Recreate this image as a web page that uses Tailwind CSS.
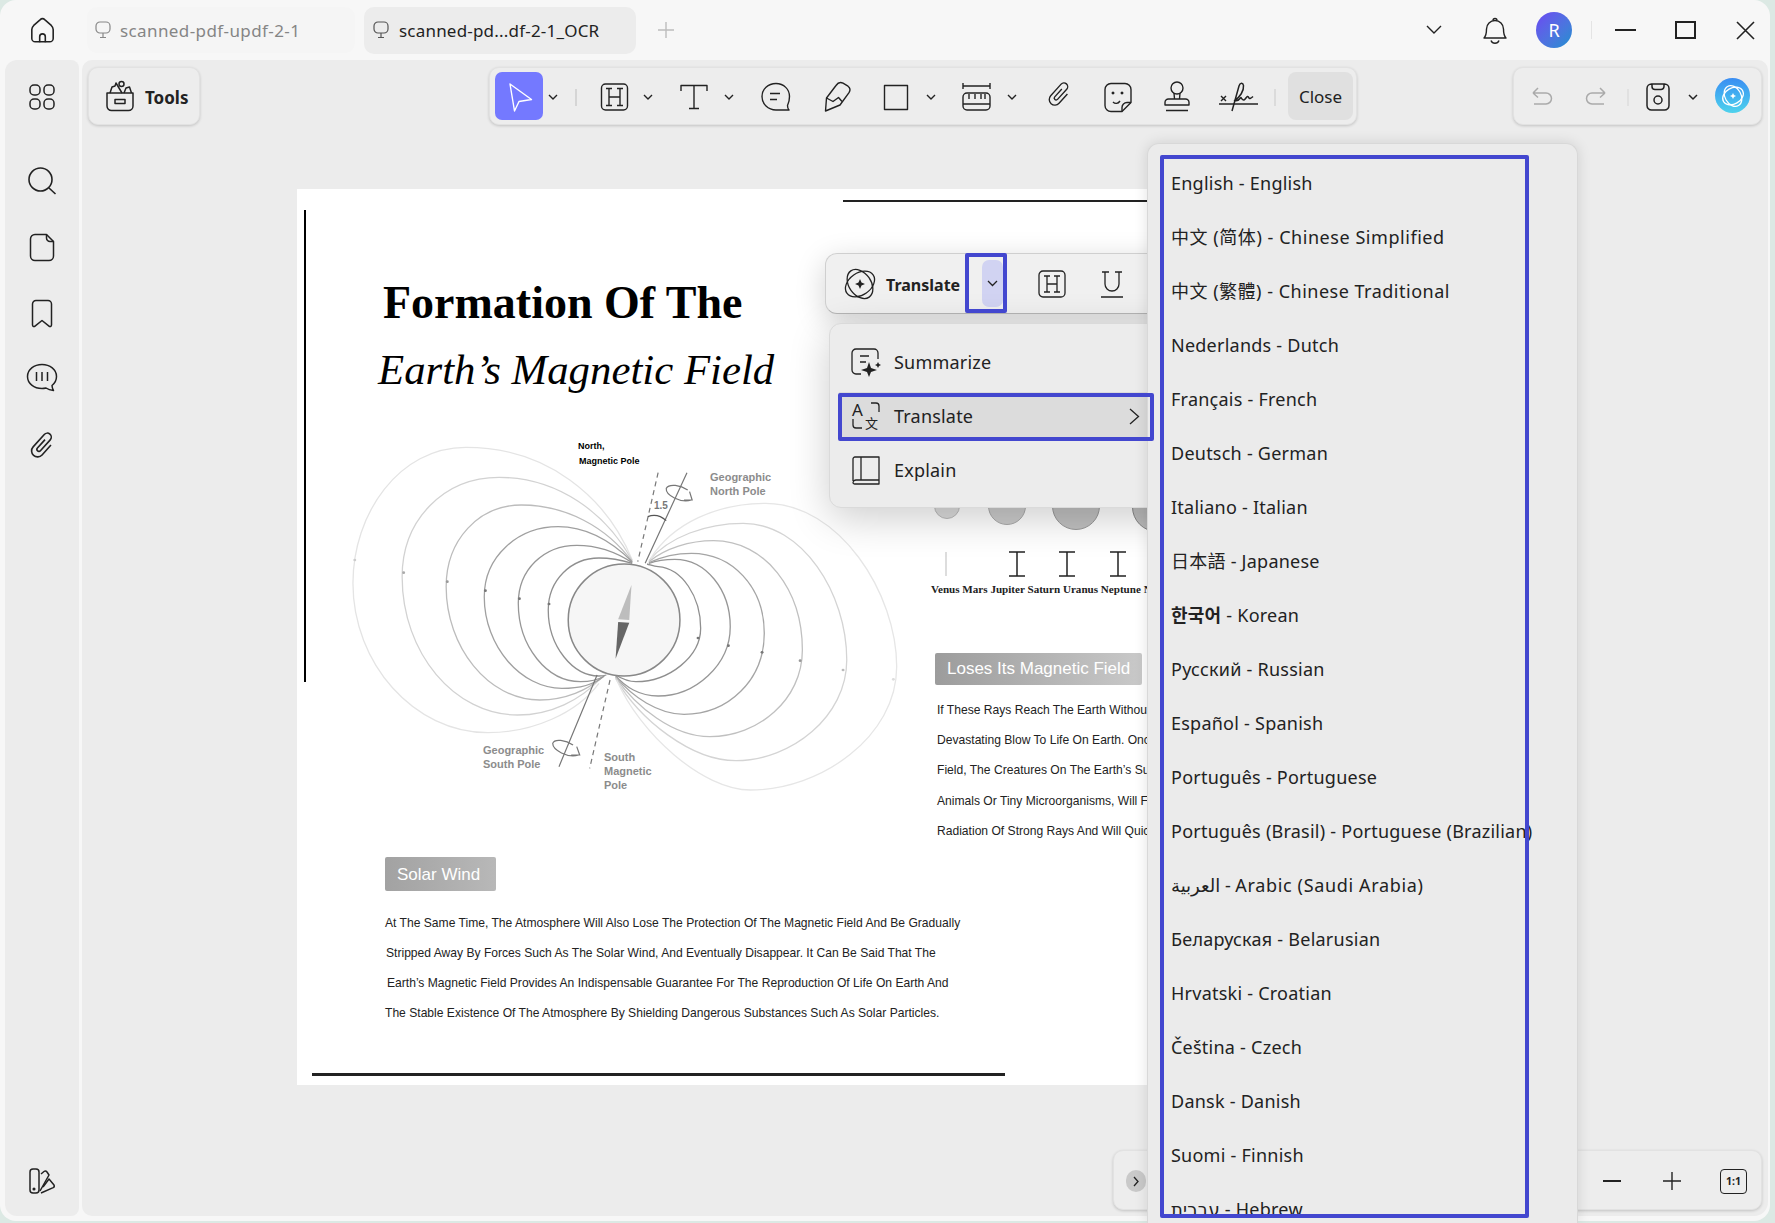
<!DOCTYPE html>
<html lang="en">
<head>
    <meta charset="UTF-8">
    <meta name="viewport" content="width=device-width, initial-scale=1.0">
    <script src="https://cdn.jsdelivr.net/npm/@tailwindcss/browser@4"></script>
    <title>UPDF</title>
</head>
<body class="bg-[#dce9e4] font-['Noto_Sans','DejaVu_Sans','Noto_Sans_CJK_SC',sans-serif] text-[#222]">
<div class="relative w-[1775px] h-[1223px] overflow-hidden">
    <!-- Window -->
    <div class="w-[1770px] h-[1221px] bg-[#f7f7f7] rounded-[16px] flex flex-col">
        <!-- Title bar -->
        <div class="h-[60px] flex items-center shrink-0">
            <svg class="ml-[29px] w-[27px] h-[27px]" viewBox="0 0 24 24" fill="none" stroke="#222" stroke-width="1.4" stroke-linejoin="round">
                <path d="M2.5 11c0-1.500 .7-2.500 1.700-3.500L9.800 2.500a3.200 3.200 0 0 1 4.400 0l5.600 5c1 1 1.700 2 1.700 3.500v8a3 3 0 0 1-3 3h-13a3 3 0 0 1-3-3z"/>
                <path d="M9.500 22.500v-5a2.500 2.500 0 0 1 5 0v5"/>
            </svg>
            <div class="ml-[31px] w-[268px] h-[46px] rounded-[10px] bg-[#f5f5f5] flex items-center pl-[8px]">
                <svg class="w-[16px] h-[18px]" viewBox="0 0 16 18" fill="none" stroke="#888" stroke-width="1.2"><rect x="1" y="1" width="14" height="11" rx="4"/><path d="M8 12v4M5 16.500h6"/></svg>
                <span class="ml-[9px] text-[17px] tracking-[0.4px] text-[#858585] leading-none">scanned-pdf-updf-2-1</span>
            </div>
            <div class="ml-[9px] w-[272px] h-[47px] rounded-[10px] bg-[#ececec] flex items-center pl-[9px]">
                <svg class="w-[16px] h-[18px]" viewBox="0 0 16 18" fill="none" stroke="#555" stroke-width="1.2"><rect x="1" y="1" width="14" height="11" rx="4"/><path d="M8 12v4M5 16.500h6"/></svg>
                <span class="ml-[10px] text-[17px] tracking-[0.2px] leading-none">scanned-pd...df-2-1_OCR</span>
            </div>
            <svg class="ml-[21px] w-[18px] h-[18px]" viewBox="0 0 18 18" stroke="#bdbdbd" stroke-width="1.4"><path d="M9 1v16M1 9h16"/></svg>
            <svg class="ml-[751px] w-[16px] h-[10px]" viewBox="0 0 16 10" fill="none" stroke="#222" stroke-width="1.4"><path d="M1 1l7 7 7-7"/></svg>
            <svg class="ml-[40px] w-[26px] h-[30px]" viewBox="0 0 26 30" fill="none" stroke="#222" stroke-width="1.4" stroke-linejoin="round">
                <path d="M2 23c2-2 2.500-4 2.500-9a8.500 8.500 0 0 1 17 0c0 5 .5 7 2.500 9z"/><path d="M11 5.500a2 2 0 0 1 4 0"/><path d="M9 25.500a4.300 4.300 0 0 0 8 0"/>
            </svg>
            <div class="ml-[28px] w-[36px] h-[36px] rounded-full bg-gradient-to-br from-[#6a45f2] to-[#0f8fcf] flex items-center justify-center text-white text-[18px]">R</div>
            <div class="ml-[19px] w-px h-[18px] bg-[#e4e4e4]"></div>
            <div class="ml-[23px] w-[21px] h-[2px] bg-[#222]"></div>
            <div class="ml-[39px] w-[21px] h-[18px] border-2 border-[#222]"></div>
            <svg class="ml-[40px] w-[19px] h-[19px]" viewBox="0 0 19 19" stroke="#222" stroke-width="1.6"><path d="M1 1l17 17M18 1L1 18"/></svg>
        </div>

        <div class="flex flex-1 gap-[3px] pl-[5px] pr-[2px] pb-[5px]">
            <!-- Sidebar -->
            <div class="w-[74px] bg-[#ececec] rounded-l-[12px] rounded-r-[8px] flex flex-col items-center">
                <svg class="mt-[24px] w-[26px] h-[26px]" viewBox="0 0 26 26" fill="none" stroke="#222" stroke-width="1.5"><rect x="1" y="1" width="10" height="10" rx="4"/><rect x="15" y="1" width="10" height="10" rx="4"/><rect x="1" y="15" width="10" height="10" rx="4"/><rect x="15" y="15" width="10" height="10" rx="4"/></svg>
                <svg class="mt-[56px] w-[30px] h-[30px]" viewBox="0 0 30 30" fill="none" stroke="#222" stroke-width="1.6"><circle cx="13.500" cy="13.500" r="11.500"/><path d="M22 22l6.500 6"/></svg>
                <svg class="mt-[37px] w-[26px] h-[29px]" viewBox="0 0 26 29" fill="none" stroke="#222" stroke-width="1.5" stroke-linejoin="round"><path d="M6 1.500h11.500l7 7V23a4.500 4.500 0 0 1-4.500 4.500H6A4.500 4.500 0 0 1 1.500 23V6A4.500 4.500 0 0 1 6 1.500z"/><path d="M17.500 1.500v3.500a3.500 3.500 0 0 0 3.500 3.500h3.500"/></svg>
                <svg class="mt-[37px] w-[22px] h-[29px]" viewBox="0 0 22 29" fill="none" stroke="#222" stroke-width="1.500" stroke-linejoin="round"><path d="M1.500 5a3.500 3.500 0 0 1 3.500-3.500h12a3.500 3.500 0 0 1 3.500 3.500v21c0 1.500-1.500 2-2.500 1.200L11 21.500l-7 5.700c-1 .8-2.500.3-2.500-1.200z"/></svg>
                <svg class="mt-[35px] w-[32px] h-[30px]" viewBox="0 0 32 30" fill="none" stroke="#222" stroke-width="1.500" stroke-linejoin="round"><path d="M16 1.500c8 0 14.500 5 14.500 12 0 3.500-1.500 6.500-4.500 9 0 1.500.5 3 1.500 5-3-.2-5.500-1-7.500-2.500-1.300.3-2.700.5-4 .5C8 25.500 1.500 20.500 1.500 13.500S8 1.500 16 1.500z"/><path d="M10.500 9v9M16 9v9M21.500 9v9"/></svg>
                <svg class="mt-[36px] w-[32px] h-[32px]" viewBox="0 0 24 24" fill="none" stroke="#222" stroke-width="1.200"><g transform="rotate(42 12 12)"><path d="M11 7.500V16a1.500 1.500 0 0 0 3 0V5a3 3 0 0 0-6 0v12.500a4.500 4.500 0 0 0 9 0V7.500"/></g></svg>
                <svg class="mt-auto mb-[21px] w-[28px] h-[28px]" viewBox="0 0 28 28" fill="none" stroke="#222" stroke-width="1.500" stroke-linejoin="round"><rect x="2" y="2" width="9" height="24" rx="3"/><path d="M13 7l3-2.500c1.200-.8 2.200-.5 3 .5l2 3-9 16"/><path d="M15 20l6-8 5 6c.5 1 .3 2-.8 2.600L13 26"/><circle cx="6" cy="22" r=".8" fill="#222"/></svg>
            </div>

            <!-- Main area -->
            <div class="flex-1 bg-[#ececec] rounded-[10px] rounded-br-[14px] flex flex-col relative overflow-hidden">
                <div class="flex items-start pt-[7px] h-[65px]">
                    <div class="ml-[6px] w-[112px] h-[58px] rounded-[10px] bg-[#ededed] border border-[#e2e2e2] shadow-[0_1px_3px_rgba(0,0,0,0.18)] flex items-center pl-[16px]">
                        <svg class="w-[30px] h-[32px]" viewBox="0 0 30 32" fill="none" stroke="#222" stroke-width="1.500" stroke-linejoin="round"><path d="M2 13h26v13a4.500 4.500 0 0 1-4.500 4.500h-17A4.500 4.500 0 0 1 2 26z"/><path d="M10 19.500h10v4H10z"/><path d="M5 13l2-6 3-1 1-3 3 5 3 5"/><circle cx="16.500" cy="4" r="2.500"/><path d="M19 13l2-5 3.500-1 2 6"/></svg>
                        <span class="ml-[10px] pt-[3px] text-[17px] font-bold">Tools</span>
                    </div>
                    <!-- Annotation toolbar -->
                    <div class="ml-[289px] w-[868px] h-[58px] rounded-[10px] bg-[#ededed] border border-[#e2e2e2] shadow-[0_1px_3px_rgba(0,0,0,0.18)] relative">
                        <div class="absolute left-[5px] top-[4px] w-[48px] h-[48px] rounded-[7px] bg-[#7479ff]"></div>
                        <svg class="absolute left-0 top-0 w-[868px] h-[58px]" viewBox="490 67 868 58" fill="none" stroke="#222" stroke-width="1.400" stroke-linejoin="round">
                            <path d="M510 83l21.500 15.500-12.500 2-4.500 9.500z" stroke="#fff"/>
                            <path d="M549 94l4 4 4-4M644 94l4 4 4-4M725 94l4 4 4-4M927 94l4 4 4-4M1008 94l4 4 4-4"/>
                            <path d="M576 88v17" stroke="#d5d5d5" stroke-width="2"/>
                            <rect x="601.500" y="83" width="26" height="26" rx="4"/>
                            <path d="M606 87.500h6M606 104.500h6M617 87.500h6M617 104.500h6M609 87.500v17M620 87.500v17M609 96h11"/>
                            <path d="M681 90v-5.500h26V90M694 84.500v23M689 107.500h10"/>
                            <path d="M776 82.500c8 0 13.500 6 13.500 13 0 4-1 7-2 9 0 2 .5 3.500 1.500 4.500h-13c-8 0-14-6-14-13.500s6-13 14-13z"/>
                            <path d="M770 92.500h10M770 98.500h7"/>
                            <path d="M825.500 110l1-13 9.500-12.500c2-3 4.500-3.800 7-2.300l5 3c2 1.500 2.500 4 1 6.500L840 104l-14.500 6z"/><path d="M826.500 97l6.500 3.500 5.500-4 3.500 4"/>
                            <rect x="884.500" y="84.500" width="23" height="24"/>
                            <path d="M963 82v6M990 82v6M963 85h27"/>
                            <rect x="963" y="92" width="27" height="17" rx="4"/><path d="M963 103h27M969 93v5M975 93v5M981 93v5M985 93v5"/>
                            <g transform="translate(1044 78) scale(1.250)"><g transform="rotate(42 12 12)"><path d="M11 7.500V16a1.500 1.500 0 0 0 3 0V5a3 3 0 0 0-6 0v12.500a4.500 4.500 0 0 0 9 0V7.500" stroke-width="1.100"/></g></g>
                            <path d="M1111 82.500h14a6 6 0 0 1 6 6v13l-9 9h-11a6 6 0 0 1-6-6v-16a6 6 0 0 1 6-6z"/><path d="M1122 110.500v-4a5 5 0 0 1 5-5h4"/><path d="M1113 101c2 2 5 2 7-1"/><circle cx="1113" cy="92" r=".8" fill="#222"/><circle cx="1122" cy="92" r=".8" fill="#222"/>
                            <circle cx="1177" cy="87" r="6"/><path d="M1174 92l.5 6M1180 92l-.5 6"/><path d="M1165 104v-2.500a3.500 3.500 0 0 1 3.500-3.500h17a3.500 3.500 0 0 1 3.500 3.500v2.500z"/><path d="M1166 109.500h22"/>
                            <path d="M1219 103h39"/><path d="M1221 95l5 5M1226 95l-5 5"/><path d="M1232 110c2-7 5-18 7-25 1-3.500 4-3.500 4.500-.5 .5 5-3.500 12-9 15 3 1 5-1 6.500-3 1 2 1.500 3 3 2.500s2-3 3.500-3.500 1 2.500 2.500 2 2-1 3-2" stroke-width="1.500"/>
                            <path d="M1275 88v17" stroke="#d5d5d5" stroke-width="1.500"/>
                        </svg>
                        <div class="absolute left-[798px] top-[4px] w-[65px] h-[48px] pt-[2px] rounded-[8px] bg-[#e0e0e0] flex items-center justify-center text-[17px]">Close</div>
                    </div>
                    <div class="ml-[156px] w-[249px] h-[58px] rounded-[10px] bg-[#ededed] border border-[#e2e2e2] shadow-[0_1px_3px_rgba(0,0,0,0.18)] relative">
                        <svg class="absolute left-0 top-0 w-[249px] h-[58px]" viewBox="1513 67 249 58" fill="none" stroke="#aaa" stroke-width="1.500" stroke-linejoin="round">
                            <path d="M1532 92l5-5M1532 92l5 4.500M1532 92h13a5.500 5.500 0 0 1 0 11h-12"/>
                            <path d="M1604 92l-5-5M1604 92l-5 4.500M1604 92h-13a5.500 5.500 0 0 0 0 11h12"/>
                            <path d="M1627 88v17" stroke="#dcdcdc"/>
                            <path d="M1651 83h-.5a4.500 4.500 0 0 0-4.500 4.500v17a4.500 4.500 0 0 0 4.500 4.500h13a4.500 4.500 0 0 0 4.500-4.500v-17a4.500 4.500 0 0 0-4.500-4.500h-.5M1651 83v2.500a3 3 0 0 0 3 3h6a3 3 0 0 0 3-3V83M1651 83h12" stroke="#222"/>
                            <circle cx="1657" cy="99" r="4" stroke="#222"/>
                            <path d="M1688 94l4 4 4-4" stroke="#222"/>
                        </svg>
                        <div class="absolute left-[201px] top-[10px] w-[35px] h-[35px] rounded-full bg-gradient-to-b from-[#3b8df2] to-[#4fd2ec] flex items-center justify-center">
                            <svg class="w-[26px] h-[26px]" viewBox="0 0 26 26" fill="none" stroke="#fff" stroke-width="1.300"><ellipse cx="13" cy="13" rx="11" ry="8" transform="rotate(-30 13 13)"/><ellipse cx="13" cy="13" rx="11" ry="8" transform="rotate(60 13 13)"/><path d="M13 10l1 2 2 1-2 1-1 2-1-2-2-1 2-1z" fill="#fff" stroke="none"/></svg>
                        </div>
                    </div>
                </div>

                <!-- PDF page, runs on under the language panel -->
                <div class="relative mt-[64px] ml-[215px] w-[1000px] h-[896px] bg-white font-['Liberation_Sans',sans-serif] text-[#222]">
                    <div class="absolute left-[7px] top-[21px] w-[2px] h-[472px] bg-black"></div>
                    <div class="absolute left-[546px] top-[11px] w-[400px] h-[2px] bg-[#222]"></div>
                    <div class="absolute left-[15px] top-[884px] w-[693px] h-[3px] bg-[#222]"></div>

                    <div class="absolute left-[86px] top-[86px] font-['Liberation_Serif',serif] font-bold text-[46px] leading-[56px] text-black whitespace-nowrap">Formation Of The</div>
                    <div class="absolute left-[81px] top-[153px] font-['Liberation_Serif',serif] italic text-[42.800px] leading-[56px] text-black whitespace-nowrap">Earth’s Magnetic Field</div>

                    <!-- Magnetic field diagram -->
                    <svg class="absolute left-[43px] top-[231px] w-[580px] h-[400px]" viewBox="0 0 1568 1200" preserveAspectRatio="none" fill="none">
                        <g stroke-width="1.300">
                            <path vector-effect="non-scaling-stroke" stroke="#e4e4e4" d="M790 420C720 230 560 82 340 82 160 82 35 280 35 490 35 730 200 938 400 938 520 938 640 880 700 790"/>
                            <path vector-effect="non-scaling-stroke" stroke="#d2d2d2" d="M790 422C720 280 590 172 430 172 280 172 168 300 168 470 168 700 310 885 480 885 570 885 650 840 705 775"/>
                            <path vector-effect="non-scaling-stroke" stroke="#bcbcbc" d="M790 425C720 320 610 255 490 255 375 255 287 360 287 500 287 680 400 840 540 840 610 840 670 810 708 772"/>
                            <path vector-effect="non-scaling-stroke" stroke="#a0a0a0" d="M790 425C730 360 660 320 590 320 480 320 390 410 390 530 390 680 490 805 600 805 650 805 690 790 712 770"/>
                            <path vector-effect="non-scaling-stroke" stroke="#979797" d="M790 428C745 395 690 376 640 376 550 376 482 450 482 550 482 680 560 785 650 785 680 785 700 778 715 768"/>
                            <path vector-effect="non-scaling-stroke" stroke="#8f8f8f" d="M790 430C760 420 730 414 700 414 625 414 563 480 563 570 563 680 630 768 700 768 710 768 715 767 720 765"/>
                            <path vector-effect="non-scaling-stroke" stroke="#8f8f8f" d="M830 432C840 435 850 440 860 440 925 445 975 530 975 625 975 710 890 785 800 785 780 785 760 775 745 765"/>
                            <path vector-effect="non-scaling-stroke" stroke="#979797" d="M835 430C855 422 880 418 905 418 990 418 1055 510 1055 620 1055 735 960 828 860 828 810 828 770 800 745 767"/>
                            <path vector-effect="non-scaling-stroke" stroke="#a5a5a5" d="M835 428C870 410 910 400 950 400 1060 400 1147 500 1147 640 1147 780 1050 883 930 883 860 883 790 830 745 770"/>
                            <path vector-effect="non-scaling-stroke" stroke="#c0c0c0" d="M835 425C880 385 945 362 1010 362 1150 362 1250 510 1250 690 1250 840 1130 950 1000 950 900 950 800 860 745 772"/>
                            <path vector-effect="non-scaling-stroke" stroke="#d4d4d4" d="M835 422C890 350 990 310 1090 310 1250 310 1370 520 1370 720 1370 890 1220 1022 1070 1022 950 1022 810 900 745 775"/>
                            <path vector-effect="non-scaling-stroke" stroke="#e6e6e6" d="M840 415C900 310 1020 250 1150 250 1350 250 1505 520 1505 740 1505 950 1300 1110 1110 1110 980 1110 810 940 748 780"/>
                        </g>
                        <g fill="#777">
                            <circle cx="565" cy="552" r="4"/><circle cx="485" cy="536" r="4"/><circle cx="393" cy="512" r="4"/><circle cx="290" cy="485" r="4" fill="#999"/><circle cx="172" cy="458" r="4" fill="#aaa"/><circle cx="40" cy="420" r="4" fill="#ccc"/>
                            <circle cx="968" cy="654" r="4"/><circle cx="1050" cy="677" r="4"/><circle cx="1141" cy="697" r="4"/><circle cx="1244" cy="722" r="4" fill="#999"/><circle cx="1360" cy="750" r="4" fill="#bbb"/><circle cx="1496" cy="778" r="4" fill="#ddd"/>
                        </g>
                        <ellipse vector-effect="non-scaling-stroke" cx="768" cy="600" rx="151" ry="168" stroke="#888" stroke-width="1.500" fill="#f6f6f6"/>
                        <path d="M788 495L752 598 782 600z" fill="#bdbdbd"/>
                        <path d="M752 606L782 608 745 716z" fill="#666"/>
                        <g stroke="#777" stroke-width="1.200">
                            <path vector-effect="non-scaling-stroke" d="M938 158L825 430M695 765L592 1040"/>
                            <path vector-effect="non-scaling-stroke" stroke-dasharray="5 4" d="M860 158L805 425M730 780L675 1045"/>
                            <path vector-effect="non-scaling-stroke" d="M832 290C850 282 868 288 882 302" stroke="#555"/>
                            <path vector-effect="non-scaling-stroke" d="M940 210C920 195 890 190 882 205 880 225 920 250 950 240M945 215L952 240 930 240"/>
                            <path vector-effect="non-scaling-stroke" d="M630 975C610 960 580 955 575 970 575 990 615 1015 645 1005M640 980L648 1005 625 1005"/>
                        </g>
                    </svg>
                    <div class="absolute left-[357px] top-[309px] text-[10px] font-bold text-[#777]">1.5</div>
                    <div class="absolute left-[281px] top-[250px] text-[9px] leading-[15px] font-bold text-black">North,<br><span class="ml-[1px]">Magnetic Pole</span></div>
                    <div class="absolute left-[413px] top-[281px] text-[11px] leading-[14px] font-bold text-[#8c8c8c]">Geographic<br>North Pole</div>
                    <div class="absolute left-[186px] top-[554px] text-[11px] leading-[14px] font-bold text-[#8c8c8c]">Geographic<br>South Pole</div>
                    <div class="absolute left-[307px] top-[561px] text-[11px] leading-[14px] font-bold text-[#8c8c8c]">South<br>Magnetic<br>Pole</div>

                    <!-- Planets -->
                    <div class="absolute left-[637px] top-[290px] w-[26px] h-[40px] rounded-full bg-[#dcdcdc] border border-[#bbb]"></div>
                    <div class="absolute left-[691px] top-[290px] w-[38px] h-[46px] rounded-full bg-[#cbcbcb] border border-[#aaa]"></div>
                    <div class="absolute left-[755px] top-[290px] w-[48px] h-[51px] rounded-full bg-[#c0c0c0] border border-[#999]"></div>
                    <div class="absolute left-[835px] top-[290px] w-[50px] h-[53px] rounded-full bg-[#c0c0c0] border border-[#888]"></div>
                    <div class="absolute left-[648px] top-[363px] w-[2px] h-[24px] bg-[#ddd]"></div>
                    <svg class="absolute left-[712px] top-[362px] w-[138px] h-[26px]" viewBox="0 0 138 26" fill="none" stroke="#222" stroke-width="1.500"><path d="M0 1h16M8 1v24M0 25h16M50 1h16M58 1v24M50 25h16M101 1h16M109 1v24M101 25h16"/></svg>
                    <div class="absolute left-[634px] top-[393px] font-['Liberation_Serif',serif] font-bold text-[11.100px] leading-[14px] whitespace-nowrap">Venus Mars Jupiter Saturn Uranus Neptune Neptune</div>

                    <!-- Loses Its Magnetic Field -->
                    <div class="absolute left-[638px] top-[464px] w-[207px] h-[32px] rounded-[2px] bg-gradient-to-r from-[#9c9c9c] to-[#c9c9c9] text-white text-[17px] leading-[32px] pl-[12px] whitespace-nowrap">Loses Its Magnetic Field</div>
                    <div class="absolute left-[640px] top-[506px] text-[12.100px] leading-[30.200px] whitespace-nowrap">
                        <div>If These Rays Reach The Earth Without</div>
                        <div>Devastating Blow To Life On Earth. Once</div>
                        <div>Field, The Creatures On The Earth’s Surface</div>
                        <div>Animals Or Tiny Microorganisms, Will Face</div>
                        <div>Radiation Of Strong Rays And Will Quickly</div>
                    </div>

                    <!-- Solar Wind -->
                    <div class="absolute left-[88px] top-[668px] w-[111px] h-[34px] rounded-[2px] bg-gradient-to-r from-[#a2a2a2] to-[#b8b8b8] text-white text-[17px] leading-[35px] pl-[12px] whitespace-nowrap">Solar Wind</div>
                    <div class="absolute left-[88px] top-[719px] text-[12.100px] leading-[30px] whitespace-nowrap">
                        <div>At The Same Time, The Atmosphere Will Also Lose The Protection Of The Magnetic Field And Be Gradually</div>
                        <div class="ml-[1px]">Stripped Away By Forces Such As The Solar Wind, And Eventually Disappear. It Can Be Said That The</div>
                        <div class="ml-[2px]">Earth’s Magnetic Field Provides An Indispensable Guarantee For The Reproduction Of Life On Earth And</div>
                        <div>The Stable Existence Of The Atmosphere By Shielding Dangerous Substances Such As Solar Particles.</div>
                    </div>
                </div>

                <!-- Zoom bar -->
                <div class="absolute left-[1031px] top-[1090px] w-[649px] h-[60px] rounded-[10px] bg-[#ededed] border border-[#e2e2e2] shadow-[0_1px_3px_rgba(0,0,0,0.18)]">
                    <div class="absolute left-[12px] top-[19px] w-[20px] h-[22px] rounded-full bg-[#c9c9c9] flex items-center justify-center">
                        <svg class="w-[7px] h-[11px]" viewBox="0 0 7 11" fill="none" stroke="#222" stroke-width="1.300"><path d="M1 1l4 4.500L1 10"/></svg>
                    </div>
                    <div class="absolute left-[489px] top-[29px] w-[18px] h-[2px] bg-[#222]"></div>
                    <svg class="absolute left-[549px] top-[21px] w-[18px] h-[18px]" viewBox="0 0 18 18" stroke="#222" stroke-width="1.400"><path d="M9 0v18M0 9h18"/></svg>
                    <div class="absolute left-[606px] top-[18px] w-[27px] h-[25px] rounded-[4px] border-[1.500px] border-[#222] flex items-center justify-center text-[10.500px] font-bold">1:1</div>
                </div>
            </div>
        </div>
    </div>

    <!-- Floating selection toolbar -->
    <div class="absolute left-[825px] top-[253px] w-[420px] h-[61px] rounded-[12px] bg-[#f0f0f0] border border-[#cfcfcf] border-b-[#b5b5b5] shadow-[0_8px_30px_rgba(0,0,0,0.18)] flex items-center">
        <svg class="ml-[16px] w-[36px] h-[36px]" viewBox="0 0 36 36" fill="none" stroke="#222" stroke-width="1.300"><ellipse cx="18" cy="18" rx="16" ry="11" transform="rotate(-35 18 18)"/><ellipse cx="18" cy="18" rx="16" ry="11" transform="rotate(55 18 18)"/><path d="M18 13l1.500 3.500L23 18l-3.500 1.500L18 23l-1.500-3.500L13 18l3.500-1.500z" fill="#222" stroke="none"/></svg>
        <span class="ml-[8px] pt-[2px] text-[16px] font-bold">Translate</span>
        <div class="absolute left-[156px] top-[6px] w-[21px] h-[47px] rounded-[7px] bg-[#d1d3f2] flex items-center justify-center">
            <svg class="w-[11px] h-[7px]" viewBox="0 0 11 7" fill="none" stroke="#222" stroke-width="1.300"><path d="M1 1l4.500 4.500L10 1"/></svg>
        </div>
        <svg class="absolute left-[212px] top-[16px] w-[28px] h-[28px]" viewBox="0 0 28 28" fill="none" stroke="#222" stroke-width="1.300"><rect x="1" y="1" width="26" height="26" rx="4"/><path d="M6 6h6M6 22h6M16 6h6M16 22h6M9 6v16M19 6v16M9 14h10"/></svg>
        <svg class="absolute left-[273px] top-[15px] w-[26px] h-[30px]" viewBox="0 0 26 30" fill="none" stroke="#222" stroke-width="1.300"><path d="M3 3h7M16 3h7M6 3v12a7 7 0 0 0 14 0V3M2 28h22"/></svg>
    </div>
    <!-- Selection menu -->
    <div class="absolute left-[829px] top-[323px] w-[400px] h-[185px] rounded-[12px] bg-[#ececec] border border-[#dadada] shadow-[0_10px_40px_rgba(0,0,0,0.2)] pt-[11px] text-[18px] tracking-[0.2px]">
        <div class="h-[54px] flex items-center pl-[21px]">
            <svg class="w-[30px] h-[30px]" viewBox="0 0 30 30" fill="none" stroke="#222" stroke-width="1.300" stroke-linejoin="round"><path d="M10 27H5a4 4 0 0 1-4-4V6a4 4 0 0 1 4-4h18a4 4 0 0 1 4 4v6"/><path d="M9 9h9M9 15h6"/><path d="M18 15l2 6 6 2-6 2-2 5-2-5-6-2 6-2z" fill="#222" stroke="none"/><path d="M27 15l1 2 2 1-2 1-1 2-1-2-2-1 2-1z" fill="#222" stroke="none"/></svg>
            <span class="ml-[13px]">Summarize</span>
        </div>
        <div class="h-[48px] my-[3px] ml-[9px] bg-[#dcdcdc] flex items-center pl-[12px] relative">
            <svg class="w-[30px] h-[30px]" viewBox="0 0 30 30" fill="none" stroke="#222" stroke-width="1.300"><path d="M20 2h5a3 3 0 0 1 3 3v6M2 18v6a3 3 0 0 0 3 3h6"/><text x="1" y="15" font-size="17" fill="#222" stroke="none" font-family="Noto Sans">A</text><text x="14" y="27" font-size="13" fill="#222" stroke="none" font-family="Noto Sans CJK SC">文</text></svg>
            <span class="ml-[13px]">Translate</span>
            <svg class="absolute left-[290px] top-[16px] w-[11px] h-[17px]" viewBox="0 0 11 17" fill="none" stroke="#222" stroke-width="1.300"><path d="M1 1l8.500 7.500L1 16"/></svg>
        </div>
        <div class="h-[54px] flex items-center pl-[21px]">
            <svg class="w-[30px] h-[30px]" viewBox="0 0 30 30" fill="none" stroke="#222" stroke-width="1.300" stroke-linejoin="round"><path d="M2 26V4a2 2 0 0 1 2-2h24v23H5a3 3 0 0 0-3 3 2 2 0 0 0 2 1h24v-4"/><path d="M10 2v23"/></svg>
            <span class="ml-[13px]">Explain</span>
        </div>
    </div>

    <!-- Language panel -->
    <div class="absolute left-[1147px] top-[143px] w-[431px] bottom-0 rounded-t-[12px] bg-[#ebebeb] border border-[#d8d8d8] border-b-0 shadow-[0_0_14px_rgba(0,0,0,0.12)]">
        <div class="mt-[12px] pl-[23px] h-[1060px] overflow-hidden text-[18px] tracking-[0.24px] whitespace-nowrap">
            <div class="h-[54px] flex items-center"><span>English - English</span></div>
            <div class="h-[54px] flex items-center tracking-[0.55px]"><span>中文 (简体) - Chinese Simplified</span></div>
            <div class="h-[54px] flex items-center tracking-[0.5px]"><span>中文 (繁體) - Chinese Traditional</span></div>
            <div class="h-[54px] flex items-center"><span>Nederlands - Dutch</span></div>
            <div class="h-[54px] flex items-center"><span>Français - French</span></div>
            <div class="h-[54px] flex items-center"><span>Deutsch - German</span></div>
            <div class="h-[54px] flex items-center"><span>Italiano - Italian</span></div>
            <div class="h-[54px] flex items-center"><span>日本語 - Japanese</span></div>
            <div class="h-[54px] flex items-center"><span><b class="font-['Noto_Sans_CJK_KR',sans-serif]">한국어</b> - Korean</span></div>
            <div class="h-[54px] flex items-center"><span>Русский - Russian</span></div>
            <div class="h-[54px] flex items-center"><span>Español - Spanish</span></div>
            <div class="h-[54px] flex items-center"><span>Português - Portuguese</span></div>
            <div class="h-[54px] flex items-center"><span>Português (Brasil) - Portuguese (Brazilian)</span></div>
            <div class="h-[54px] flex items-center tracking-[0.65px]"><span>العربية - Arabic (Saudi Arabia)</span></div>
            <div class="h-[54px] flex items-center"><span>Беларуская - Belarusian</span></div>
            <div class="h-[54px] flex items-center"><span>Hrvatski - Croatian</span></div>
            <div class="h-[54px] flex items-center"><span>Čeština - Czech</span></div>
            <div class="h-[54px] flex items-center"><span>Dansk - Danish</span></div>
            <div class="h-[54px] flex items-center"><span>Suomi - Finnish</span></div>
            <div class="h-[54px] flex items-center"><span>עברית - Hebrew</span></div>
        </div>
    </div>

    <!-- Blue highlight boxes -->
    <div class="absolute left-[1160px] top-[155px] w-[369px] h-[1063px] border-4 border-[#4347cf] rounded-[2px]"></div>
    <div class="absolute left-[838px] top-[393px] w-[316px] h-[48px] border-4 border-[#4347cf] rounded-[2px]"></div>
    <div class="absolute left-[965px] top-[253px] w-[42px] h-[60px] border-4 border-[#4347cf] rounded-[2px]"></div>
</div>
</body>
</html>
